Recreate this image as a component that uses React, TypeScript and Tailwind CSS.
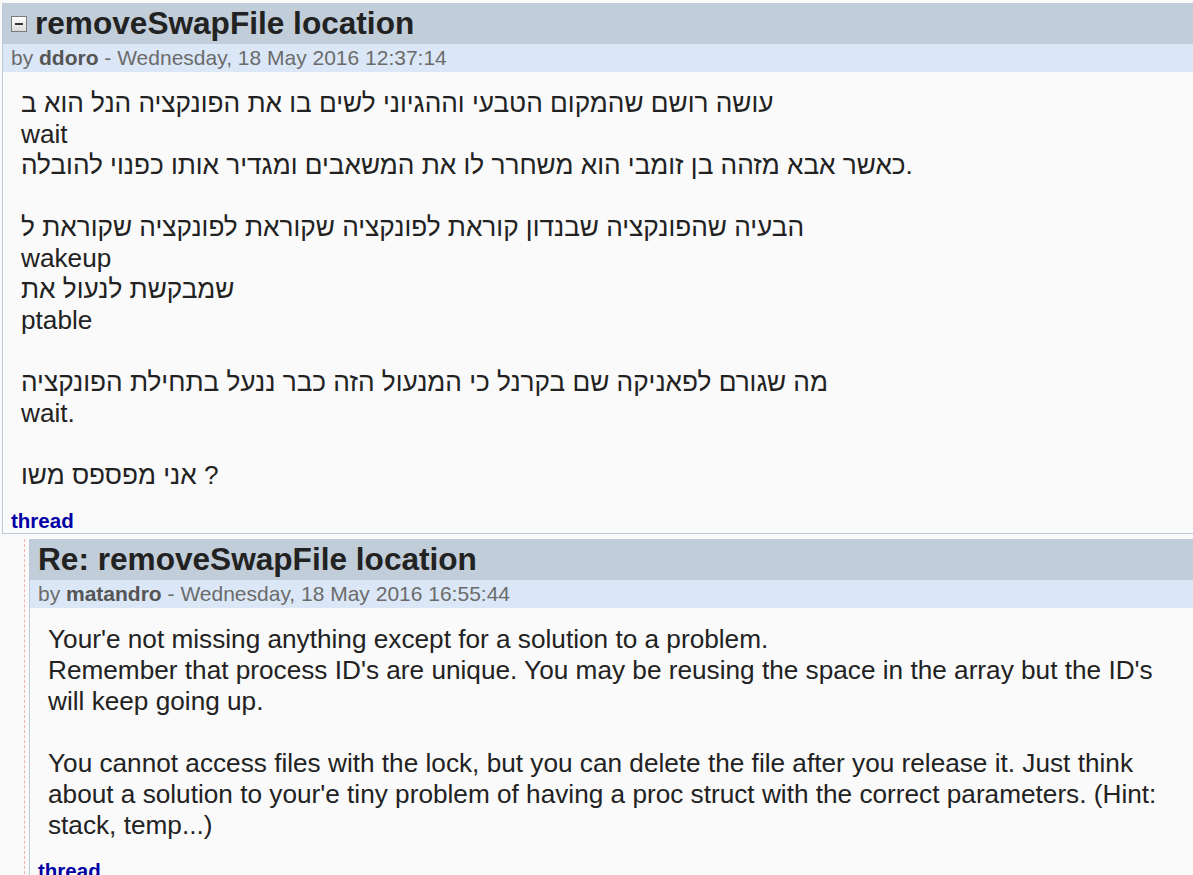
import React from 'react';

type Post = {
  title: string;
  author: string;
  date: string;
  lines: string[];
  collapsible?: boolean;
};

const firstPost: Post = {
  title: 'removeSwapFile location',
  author: 'ddoro',
  date: 'Wednesday, 18 May 2016 12:37:14',
  collapsible: true,
  lines: [
    'עושה רושם שהמקום הטבעי וההגיוני לשים בו את הפונקציה הנל הוא ב',
    'wait',
    'כאשר אבא מזהה בן זומבי הוא משחרר לו את המשאבים ומגדיר אותו כפנוי להובלה.',
    '',
    'הבעיה שהפונקציה שבנדון קוראת לפונקציה שקוראת לפונקציה שקוראת ל',
    'wakeup',
    'שמבקשת לנעול את',
    'ptable',
    '',
    'מה שגורם לפאניקה שם בקרנל כי המנעול הזה כבר ננעל בתחילת הפונקציה',
    'wait.',
    '',
    'אני מפספס משו ?'
  ]
};

const reply: Post = {
  title: 'Re: removeSwapFile location',
  author: 'matandro',
  date: 'Wednesday, 18 May 2016 16:55:44',
  lines: [
    "Your'e not missing anything except for a solution to a problem.",
    "Remember that process ID's are unique. You may be reusing the space in the array but the ID's will keep going up.",
    '',
    "You cannot access files with the lock, but you can delete the file after you release it. Just think about a solution to your'e tiny problem of having a proc struct with the correct parameters. (Hint: stack, temp...)"
  ]
};

function CollapseIcon() {
  return (
    <span className="mr-[8px] flex h-[16px] w-[16px] shrink-0 items-center justify-center border border-[#7b7b7b] bg-gradient-to-b from-[#ffffff] to-[#dcdcdc]">
      <span className="block h-[2px] w-[8px] bg-[#333333]" />
    </span>
  );
}

function ForumPost({ post }: { post: Post }) {
  return (
    <div className="border-b border-l border-[#bccbdc] bg-[#fafafa]">
      <div className="flex h-[41px] items-center bg-[#c1cdd9] pl-[8px]">
        {post.collapsible && <CollapseIcon />}
        <h2 className="text-[31.6px] leading-[41px] font-bold whitespace-nowrap text-[#222222]">{post.title}</h2>
      </div>
      <div className="h-[28px] bg-[#dbe7f7] pl-[8px] text-[21px] leading-[28px] whitespace-nowrap text-[#6b6b6b]">
        by <span className="font-bold text-[#555555]">{post.author}</span> - {post.date}
      </div>
      <div className="pt-[16px] pr-[18px] pb-[18px] pl-[18px] text-[26.2px] leading-[31px] text-[#222222]">
        {post.lines.map((line, i) => (
          <div key={i} className="min-h-[31px]">
            {line}
          </div>
        ))}
      </div>
      <div className="pl-[8px] text-[20.5px] leading-[24px] font-bold">
        <a href="#" className="text-[#0000a5]">
          thread
        </a>
      </div>
    </div>
  );
}

export default function App() {
  return (
    <div className="min-h-screen overflow-hidden bg-[#fafafa] pt-[3px] font-['Liberation_Sans',Arial,sans-serif]">
      <div className="ml-[2px]">
        <ForumPost post={firstPost} />
      </div>
      <div className="mt-[5px] ml-[24px] border-l border-dashed border-[#f0b2b2] pl-[4px]">
        <ForumPost post={reply} />
      </div>
    </div>
  );
}
